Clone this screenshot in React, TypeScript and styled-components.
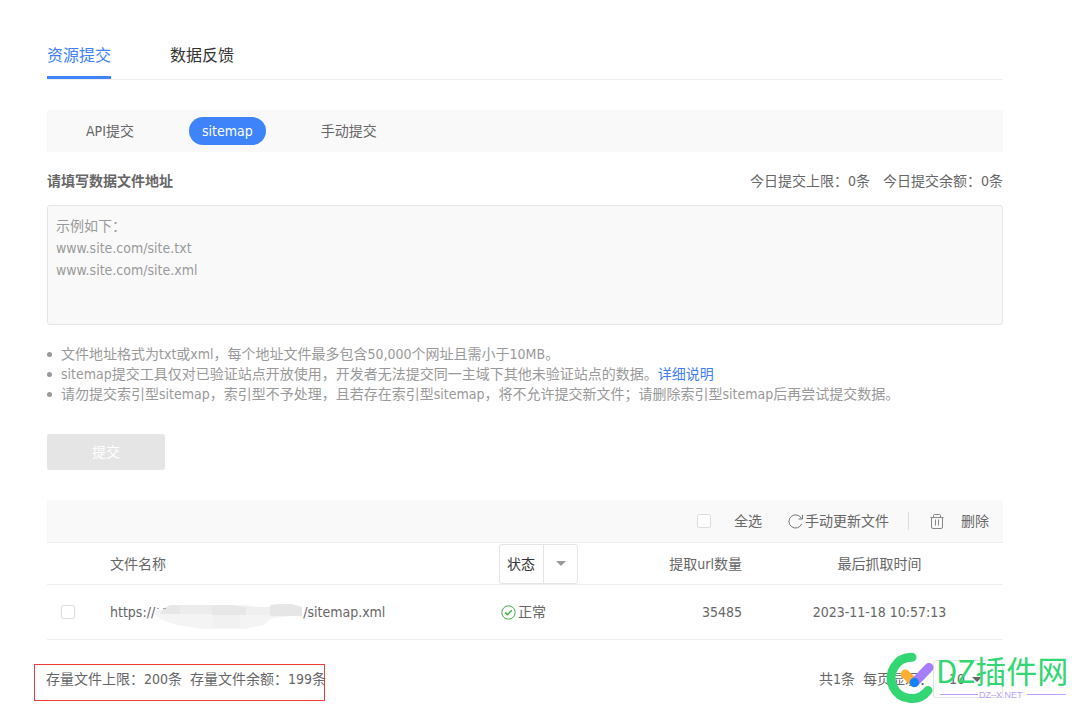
import React from "react";
import styled, { createGlobalStyle } from "styled-components";

const GlobalStyle = createGlobalStyle`
  * { box-sizing: border-box; }
  body {
    margin: 0;
    background: #fff;
    color: #666;
    font: 14px/20px "DejaVu Sans Condensed", "Noto Sans", "Noto Sans CJK SC", sans-serif;
  }
  button, input, select, textarea { font: inherit; color: inherit; margin: 0; }
  button { border: 0; background: none; padding: 0; cursor: pointer; }
`;

const Page = styled.main`
  padding: 30px 83px 0 47px;
`;

const Tabs = styled.nav`
  display: flex;
  gap: 59px;
  height: 50px;
  border-bottom: 1px solid #eee;
`;

const Tab = styled.a<{ $active?: boolean }>`
  height: 49px;
  line-height: 52px;
  font-size: 16px;
  text-decoration: none;
  color: ${(p) => (p.$active ? "#4082fb" : "#333")};
  border-bottom: 3px solid ${(p) => (p.$active ? "#3f83fb" : "transparent")};
`;

const ModeBar = styled.div`
  display: flex;
  align-items: center;
  gap: 42px;
  height: 42px;
  margin-top: 30px;
  padding-left: 26px;
  background: #f9f9f9;
`;

const Mode = styled.button<{ $active?: boolean }>`
  height: 28px;
  padding: 0 13px;
  border-radius: 14px;
  background: ${(p) => (p.$active ? "#3f83fb" : "none")};
  color: ${(p) => (p.$active ? "#fff" : "#666")};
`;

const FieldHead = styled.div`
  display: flex;
  justify-content: space-between;
  margin: 19px 0 14px;
`;

const FieldLabel = styled.label`
  font-weight: 700;
`;

const Quota = styled.div`
  display: flex;
  gap: 13px;
`;

const Address = styled.textarea`
  display: block;
  width: 100%;
  height: 120px;
  padding: 9px 8px;
  border: 1px solid #e5e5e5;
  border-radius: 3px;
  background: #f9f9f9;
  line-height: 22px;
  resize: none;
  &::placeholder { color: #999; opacity: 1; }
`;

const Tips = styled.ul`
  margin: 19px 0 30px;
  padding: 0;
  list-style: none;
  color: #999;
`;

const Tip = styled.li`
  display: flex;
  align-items: center;
  &::before {
    content: "";
    width: 5px;
    height: 5px;
    margin-right: 9px;
    border-radius: 50%;
    background: #999;
  }
`;

const TipLink = styled.a`
  color: #3f7dfb;
  text-decoration: none;
`;

const Submit = styled.button`
  display: block;
  width: 118px;
  height: 36px;
  border-radius: 3px;
  background: #e5e5e5;
  color: #fff;
`;

const Toolbar = styled.div`
  display: flex;
  align-items: center;
  justify-content: flex-end;
  height: 43px;
  margin-top: 30px;
  padding-right: 14px;
  border-bottom: 1px solid #eee;
  background: #f9f9f9;
`;

const Check = styled.input`
  appearance: none;
  display: block;
  width: 14px;
  height: 14px;
  border: 1px solid #ddd;
  border-radius: 2px;
  background: #fff;
`;

const CheckLabel = styled.label`
  display: flex;
  align-items: center;
  gap: 23px;
  margin-right: 26px;
`;

const Action = styled.button<{ $gap: number }>`
  display: flex;
  align-items: center;
  gap: ${(p) => p.$gap}px;
`;

const Separator = styled.span`
  width: 1px;
  height: 18px;
  margin: 0 21px 0 19px;
  background: #ddd;
`;

const Table = styled.table`
  width: 100%;
  table-layout: fixed;
  border-collapse: separate;
  border-spacing: 0;
`;

const Cell = styled.td<{ $align?: string }>`
  height: 55px;
  padding: 0;
  border-bottom: 1px solid #eee;
  text-align: ${(p) => p.$align || "left"};
`;

const HeadCell = styled(Cell)`
  height: 42px;
  font-weight: 400;
`;

const CountCell = styled(Cell)`
  padding-right: 14px;
`;

const CountHead = styled(HeadCell)`
  padding-right: 14px;
`;

const CheckCell = styled(Cell)`
  padding-left: 14px;
`;

const Col = styled.col<{ $w?: number }>`
  width: ${(p) => (p.$w ? `${p.$w}px` : "auto")};
`;

const SelectBox = styled.div<{ $w: number }>`
  position: relative;
  width: ${(p) => p.$w}px;
`;

const Select = styled.select<{ $h: number; $pad: number }>`
  appearance: none;
  display: block;
  width: 100%;
  height: ${(p) => p.$h}px;
  padding: 0 0 0 ${(p) => p.$pad}px;
  border: 1px solid #e5e5e5;
  border-radius: 3px;
  background: #fff;
`;

const StatusSelect = styled(Select)`
  color: #333;
`;

const Arrow = styled.span<{ $w: number; $line?: boolean }>`
  position: absolute;
  top: 0;
  right: 0;
  bottom: 0;
  width: ${(p) => p.$w}px;
  display: flex;
  align-items: center;
  justify-content: center;
  pointer-events: none;
  color: ${(p) => (p.$line ? "#999" : "#666")};
  border-left: ${(p) => (p.$line ? "1px solid #e5e5e5" : "0")};
`;

const FileLine = styled.div`
  display: flex;
  align-items: center;
`;

const Status = styled.div`
  display: flex;
  align-items: center;
  gap: 2px;
  padding-left: 2px;
`;

const Footer = styled.footer`
  position: relative;
  display: flex;
  justify-content: space-between;
  align-items: flex-start;
  padding: 20px 0 17px;
`;

const Storage = styled.div`
  display: flex;
  gap: 8px;
  width: 291px;
  height: 37px;
  margin: 4px 0 0 -13px;
  padding: 4px 0 0 11px;
  border: 1px solid #f23c3c;
  white-space: nowrap;
`;

const Pager = styled.div`
  display: flex;
  align-items: center;
`;

const Total = styled.span`
  margin-right: 8px;
`;

const Watermark = styled.svg`
  position: absolute;
  top: 10px;
  right: -68px;
  overflow: visible;
  pointer-events: none;
`;

const Caret = () => (
  <svg width="10" height="5" viewBox="0 0 10 5" aria-hidden="true">
    <path d="M0 0h10L5 5z" fill="currentColor" />
  </svg>
);

const RefreshIcon = () => (
  <svg width="15" height="15" viewBox="0 0 15 15" fill="none" stroke="#777" aria-hidden="true">
    <path d="M13.7 9.800A6.600 6.600 0 1 1 13.500 4.600" />
    <path d="M14.500 1v4H10.500" />
  </svg>
);

const TrashIcon = () => (
  <svg width="14" height="15" viewBox="0 0 14 15" fill="none" stroke="#888" aria-hidden="true">
    <path d="M.5 3.500h13M3.500 3.200V1.500q0-1 1-1h5q1 0 1 1v1.700M1.500 3.500v9.500q0 1.500 1.500 1.500h8q1.500 0 1.500-1.500v-9.500M5.500 5.500v6M8.500 5.500v6" />
  </svg>
);

const OkIcon = () => (
  <svg width="15" height="15" viewBox="0 0 15 15" fill="none" stroke="#43ab47" aria-hidden="true">
    <circle cx="7.5" cy="7.5" r="6.7" />
    <path d="M4.2 7.4l2.3 2.3 4.3-4.4" strokeWidth="1.5" />
  </svg>
);

const HiddenHost = () => (
  <svg width="148" height="34" viewBox="0 -10 148 34" aria-hidden="true">
    <path d="M0 7l8-3 7-4h75l20 3 12-4 14 0 11 3v8l-28 3-4 1-6 6-15 3-7 3-14 2h-13l-13-4-25-4-15-5L0 9z" fill="#f4f4f5" />
    <path d="M8 4l7-4h10v9H5zM57 0h20l14 2v8H57z" fill="#e7e7e7" />
    <path d="M25 0h32v9H25z" fill="#ececec" />
    <path d="M91 2h24v8H91z" fill="#efefef" />
    <path d="M115 0l9-1h12l11 3v9h-32z" fill="#e6e6e6" />
    <path d="M57 10h28v13H60z" fill="#f1f1f1" />
    <path d="M2 3.500h2M8 3.500h3" stroke="#aaa" />
  </svg>
);

const SiteMark = () => (
  <Watermark width="184" height="56" viewBox="0 0 184 56" role="img" aria-label="DZ插件网">
    <g fill="none" strokeLinecap="round" strokeWidth="9">
      <path d="M25 7.300A20.600 20.600 0 1 0 41 40.500" stroke="#32d672" />
      <path d="M18.300 24L27 32.500" stroke="#fdb02f" />
      <path d="M42 17.500L27.500 32.500" stroke="#a57dfd" />
    </g>
    <circle cx="27.300" cy="32.500" r="4.700" fill="#1284fb" />
    <text x="49" y="33" fontFamily="Noto Sans CJK SC, sans-serif" fontSize="31" fill="#32d672">DZ插件网</text>
    <path d="M53 44.500h38M140 44.500h39" stroke="#b9a0fa" />
    <text x="92" y="48" fontFamily="Liberation Sans, sans-serif" fontSize="9" fill="#b9a0fa">DZ–X.NET</text>
  </Watermark>
);

export default function App() {
  return (
    <>
      <GlobalStyle />
      <Page lang="zh-CN">
        <Tabs>
          <Tab href="#submit" $active>资源提交</Tab>
          <Tab href="#feedback">数据反馈</Tab>
        </Tabs>
        <ModeBar>
          <Mode>API提交</Mode>
          <Mode $active>sitemap</Mode>
          <Mode>手动提交</Mode>
        </ModeBar>
        <FieldHead>
          <FieldLabel htmlFor="address">请填写数据文件地址</FieldLabel>
          <Quota>
            <span>今日提交上限：0条</span>
            <span>今日提交余额：0条</span>
          </Quota>
        </FieldHead>
        <Address id="address" placeholder={"示例如下：\nwww.site.com/site.txt\nwww.site.com/site.xml"} />
        <Tips>
          <Tip>文件地址格式为txt或xml，每个地址文件最多包含50,000个网址且需小于10MB。</Tip>
          <Tip>
            sitemap提交工具仅对已验证站点开放使用，开发者无法提交同一主域下其他未验证站点的数据。
            <TipLink href="#detail">详细说明</TipLink>
          </Tip>
          <Tip>请勿提交索引型sitemap，索引型不予处理，且若存在索引型sitemap，将不允许提交新文件；请删除索引型sitemap后再尝试提交数据。</Tip>
        </Tips>
        <Submit>提交</Submit>
        <Toolbar>
          <CheckLabel>
            <Check type="checkbox" />
            全选
          </CheckLabel>
          <Action $gap={2}>
            <RefreshIcon />
            手动更新文件
          </Action>
          <Separator />
          <Action $gap={17}>
            <TrashIcon />
            删除
          </Action>
        </Toolbar>
        <Table>
          <colgroup>
            <Col $w={63} />
            <Col />
            <Col $w={120} />
            <Col $w={137} />
            <Col $w={247} />
          </colgroup>
          <thead>
            <tr>
              <HeadCell />
              <HeadCell as="th">文件名称</HeadCell>
              <HeadCell as="th">
                <SelectBox $w={79}>
                  <StatusSelect $h={40} $pad={7} aria-label="状态">
                    <option>状态</option>
                  </StatusSelect>
                  <Arrow $w={35} $line><Caret /></Arrow>
                </SelectBox>
              </HeadCell>
              <CountHead as="th" $align="right">提取url数量</CountHead>
              <HeadCell as="th" $align="center">最后抓取时间</HeadCell>
            </tr>
          </thead>
          <tbody>
            <tr>
              <CheckCell><Check type="checkbox" aria-label="选择文件" /></CheckCell>
              <Cell>
                <FileLine>
                  https://
                  <HiddenHost />
                  /sitemap.xml
                </FileLine>
              </Cell>
              <Cell><Status><OkIcon />正常</Status></Cell>
              <CountCell $align="right">35485</CountCell>
              <Cell $align="center">2023-11-18 10:57:13</Cell>
            </tr>
          </tbody>
        </Table>
        <Footer>
          <Storage>
            <span>存量文件上限：200条</span>
            <span>存量文件余额：199条</span>
          </Storage>
          <Pager>
            <Total>共1条</Total>
            <label htmlFor="size">每页显示：</label>
            <SelectBox $w={70}>
              <Select id="size" $h={38} $pad={15}>
                <option>10</option>
              </Select>
              <Arrow $w={53}><Caret /></Arrow>
            </SelectBox>
          </Pager>
          <SiteMark />
        </Footer>
      </Page>
    </>
  );
}
